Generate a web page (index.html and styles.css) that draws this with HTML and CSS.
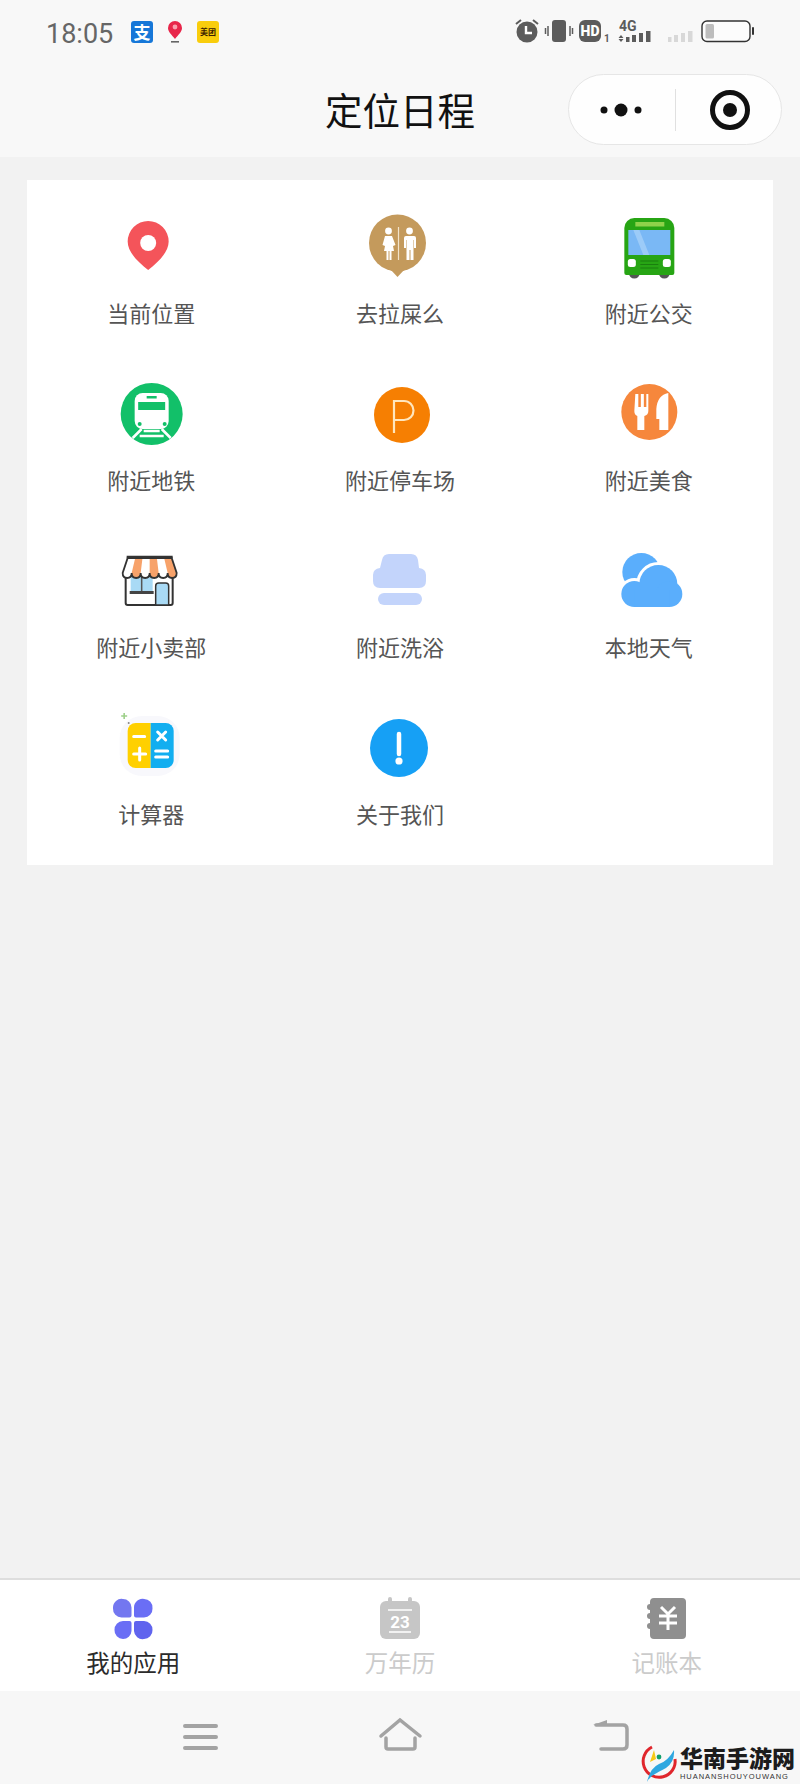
FILE: index.html
```html
<!DOCTYPE html>
<html lang="zh-CN">
<head>
  <meta charset="UTF-8" />
  <meta name="viewport" content="width=device-width, initial-scale=1.0"/>
  <title>定位日程</title>
  <link rel="stylesheet" href="styles.css">
</head>
<body>

<div class="page">

  <!-- Status bar -->
  <div class="status-bar">
    <span class="time">18:05</span>
    <span class="app-icon alipay">支</span>
    <svg class="map-icon" viewBox="0 0 16 24">
      <path d="M8 1a7 7 0 0 1 7 7c0 4-4 7-7 11c-3-4-7-7-7-11a7 7 0 0 1 7-7z" fill="#e8264a"/>
      <circle cx="8" cy="7" r="2.4" fill="#f9a0ae"/>
      <rect x="4" y="21" width="8" height="1.6" fill="#666"/>
    </svg>
    <span class="app-icon meituan">美团</span>
    <svg class="status-icons" viewBox="510 14 250 36">
      <!-- alarm -->
      <circle cx="528" cy="32" r="10.5" fill="#5c5c5c"/>
      <path d="M517 24l5-4M539 24l-5-4" stroke="#5c5c5c" stroke-width="2" fill="none"/>
      <path d="M527 26v7h6" stroke="#fff" stroke-width="2.4" fill="none"/>
      <!-- vibrate -->
      <rect x="553" y="20" width="14" height="22" rx="3" fill="#5c5c5c"/>
      <path d="M549 26v10M546.500 28v6M571 26v10M573.500 28v6" stroke="#5c5c5c" stroke-width="1.500"/>
      <!-- HD -->
      <rect x="580" y="20" width="22" height="22" rx="6" fill="#5c5c5c"/>
      <text class="hd-text" x="591" y="36">HD</text>
      <text class="sim-text" x="605" y="42">1</text>
      <!-- 4G signal -->
      <text class="net-text" x="620" y="31">4G</text>
      <path d="M622 35l-2.500 3h5zM622 42l-2.500-3h5z" fill="#5c5c5c"/>
      <rect x="627" y="37" width="3.500" height="5" fill="#5c5c5c"/>
      <rect x="633" y="35" width="4" height="7" fill="#5c5c5c"/>
      <rect x="640" y="33" width="4" height="9" fill="#5c5c5c"/>
      <rect x="647" y="31" width="4.500" height="11" fill="#5c5c5c"/>
      <rect x="669" y="37" width="3.500" height="5" fill="#d8d8d8"/>
      <rect x="675" y="35" width="4" height="7" fill="#d8d8d8"/>
      <rect x="682" y="33" width="4" height="9" fill="#d8d8d8"/>
      <rect x="689" y="31" width="4.500" height="11" fill="#d8d8d8"/>
      <!-- battery -->
      <rect x="703" y="21" width="48" height="20.500" rx="5" fill="#fcfcfc" stroke="#333" stroke-width="1.400"/>
      <rect x="706.500" y="24" width="8.500" height="14.500" rx="1.500" fill="#bdbdbd"/>
      <rect x="753" y="27" width="2" height="8" rx="1" fill="#333"/>
    </svg>
  </div>

  <!-- Title bar -->
  <header class="title-bar">
    <h1>定位日程</h1>
    <div class="capsule">
      <svg class="capsule-more" viewBox="0 0 60 20">
        <circle cx="13" cy="10" r="3.500"/>
        <circle cx="30" cy="10" r="6.500"/>
        <circle cx="47" cy="10" r="3.500"/>
      </svg>
      <span class="capsule-line"></span>
      <svg class="capsule-target" viewBox="0 0 44 44">
        <circle cx="22" cy="22" r="17.500" fill="none" stroke="#111" stroke-width="5"/>
        <circle cx="22" cy="22" r="7"/>
      </svg>
    </div>
  </header>

  <!-- App grid -->
  <main class="content">
    <section class="card">

      <a class="item">
        <svg class="item-icon" viewBox="111.330 205 80 80">
          <path d="M148.500 221a20.500 20.500 0 0 1 20.500 20.500c0 11-11 21-20.500 28.500c-9.500-7.500-20.500-17.500-20.500-28.500a20.500 20.500 0 0 1 20.500-20.500z" fill="#f4545a"/>
          <circle cx="148.500" cy="243" r="8" fill="#fff"/>
        </svg>
        <span>当前位置</span>
      </a>

      <a class="item">
        <svg class="item-icon" viewBox="360 205 80 80">
          <circle cx="397.500" cy="243" r="28.500" fill="#c49a5c"/>
          <path d="M390 269h15l-7.500 8z" fill="#c49a5c"/>
          <path d="M398.500 227v33" stroke="#f3e4cb" stroke-width="1.200"/>
          <circle cx="388.500" cy="231" r="3.400" fill="#fff"/>
          <path d="M385 236h7l3.500 9l-2.500 1l1 5h-2.500v9h-2v-9h-1v9h-2v-9h-2.500l1-5l-2.500-1z" fill="#fff"/>
          <circle cx="409.500" cy="231" r="3.400" fill="#fff"/>
          <path d="M405 236h9q2 0 2 2v10h-2v-8h-.500v20h-3v-10h-1v10h-3v-20h-.500v8h-2v-10q0-2 2-2z" fill="#fff"/>
        </svg>
        <span>去拉屎么</span>
      </a>

      <a class="item">
        <svg class="item-icon" viewBox="608.670 205 80 80">
          <circle cx="634" cy="273" r="5.500" fill="#555"/>
          <circle cx="664" cy="273" r="5.500" fill="#555"/>
          <path d="M634 218h30a10 10 0 0 1 10 10v45a2 2 0 0 1-2 2h-46a2 2 0 0 1-2-2v-45a10 10 0 0 1 10-10z" fill="#27a514"/>
          <rect x="635" y="222" width="29" height="4.500" fill="#8ed24a"/>
          <rect x="628" y="230" width="42" height="25" fill="#7ab8f5"/>
          <path d="M633 230l10 25h6l-10-25z" fill="#9ccbf8"/>
          <rect x="627.500" y="259" width="8" height="8" rx="2.500" fill="#fff"/>
          <rect x="662.500" y="259" width="8" height="8" rx="2.500" fill="#fff"/>
          <path d="M640 261h18M640 264.500h18M640 268h18" stroke="#1a7f0e" stroke-width="1.200"/>
        </svg>
        <span>附近公交</span>
      </a>

      <a class="item">
        <svg class="item-icon" viewBox="111.330 372 80 80">
          <circle cx="152" cy="414" r="31" fill="#12c069"/>
          <path d="M143 393h18a8 8 0 0 1 8 8v20a8 8 0 0 1-8 8h-18a8 8 0 0 1-8-8v-20a8 8 0 0 1 8-8z" fill="#fff"/>
          <rect x="138.500" y="402" width="27" height="8" fill="#12c069"/>
          <rect x="147" y="396" width="10" height="2.500" fill="#12c069"/>
          <circle cx="140" cy="424" r="2" fill="#12c069"/>
          <circle cx="165" cy="424" r="2" fill="#12c069"/>
          <path d="M142 429l-9 9M162 429l9 9M144 431h16M140 436h24" stroke="#fff" stroke-width="2.600" fill="none"/>
        </svg>
        <span>附近地铁</span>
      </a>

      <a class="item">
        <svg class="item-icon" viewBox="360 372 80 80">
          <circle cx="402" cy="415" r="28" fill="#f67f02"/>
          <path d="M394 433v-32h10a9.500 9.500 0 0 1 0 19h-10" fill="none" stroke="#ffe6bd" stroke-width="2.200"/>
        </svg>
        <span>附近停车场</span>
      </a>

      <a class="item">
        <svg class="item-icon" viewBox="608.670 372 80 80">
          <circle cx="649" cy="412" r="28" fill="#f6873c"/>
          <path d="M635 394h3v13h2.500v-13h3v13h2.500v-13h2v17q0 4-4 5v14h-7v-14q-3-1-3-5z" fill="#fff"/>
          <path d="M668 393q-11 2-12 16v10h3v11h9z" fill="#fff"/>
        </svg>
        <span>附近美食</span>
      </a>

      <a class="item">
        <svg class="item-icon" viewBox="111.330 539 80 80">
          <rect x="126" y="570" width="47" height="35" rx="2" fill="#fff" stroke="#333" stroke-width="2"/>
          <rect x="131" y="576" width="22" height="17" fill="#a9daf5"/>
          <path d="M142 576v17" stroke="#555" stroke-width="1.500"/>
          <rect x="130" y="591" width="24" height="3" fill="#444"/>
          <path d="M156 605v-19q0-3 3-3h7q3 0 3 3v19z" fill="#a9daf5" stroke="#333" stroke-width="1.500"/>
          <path d="M128 558h44l5 15q0 5-4.500 5t-4.500-5q0 5-4.500 5t-4.500-5q0 5-4.500 5t-4.500-5q0 5-4.500 5t-4.500-5q0 5-4.500 5t-4.500-5q0 5-4.500 5t-4.500-5z" fill="#fff"/>
          <path d="M135.300 559l-3.300 14q0 5 4.500 5t4.500-5l1.700-14zM150 559v14q0 5 4.500 5t4.500-5l-1.700-14zM164.700 559l3.300 14q0 5 4.500 5t4.500-5l-5-14z" fill="#f7a26a"/>
          <path d="M128 558h44l5 15q0 5-4.500 5t-4.500-5q0 5-4.500 5t-4.500-5q0 5-4.500 5t-4.500-5q0 5-4.500 5t-4.500-5q0 5-4.500 5t-4.500-5q0 5-4.500 5t-4.500-5z" fill="none" stroke="#333" stroke-width="1.800"/>
          <path d="M127 557h46" stroke="#333" stroke-width="2.400"/>
        </svg>
        <span>附近小卖部</span>
      </a>

      <a class="item">
        <svg class="item-icon" viewBox="360 539 80 80">
          <path d="M389 554h22q6 0 7 6l1 8q7 1 7 7v6q0 7-7 7h-39q-7 0-7-7v-6q0-6 7-7l2-8q1-6 7-6z" fill="#c3d4fb"/>
          <rect x="378" y="593" width="44" height="12" rx="6" fill="#c3d4fb"/>
        </svg>
        <span>附近洗浴</span>
      </a>

      <a class="item">
        <svg class="item-icon" viewBox="608.670 539 80 80">
          <circle cx="641" cy="572" r="19" fill="#5aaefc"/>
          <g fill="#fff" stroke="#fff" stroke-width="6">
            <circle cx="634" cy="594" r="13"/>
            <circle cx="658" cy="584" r="19"/>
            <circle cx="669" cy="594" r="13"/>
          </g>
          <rect x="618" y="607" width="70" height="6" fill="#fff"/>
          <g fill="#5aaefc">
            <circle cx="634" cy="594" r="13"/>
            <circle cx="658" cy="584" r="19"/>
            <circle cx="669" cy="594" r="13"/>
            <rect x="634" y="590" width="35" height="17"/>
          </g>
        </svg>
        <span>本地天气</span>
      </a>

      <a class="item">
        <svg class="item-icon" viewBox="111.330 706 80 80">
          <rect x="120" y="716" width="60" height="60" rx="22" fill="#f8f8fc"/>
          <path d="M136 723h15v45h-15a8 8 0 0 1-8-8v-29a8 8 0 0 1 8-8z" fill="#ffd000"/>
          <path d="M151 723h15a8 8 0 0 1 8 8v29a8 8 0 0 1-8 8h-15z" fill="#12aef0"/>
          <path d="M134 736.500h11M134 754h12M140 748v12" stroke="#fff" stroke-width="3" stroke-linecap="round"/>
          <path d="M158 732l8 8M166 732l-8 8M156 751h12M156 757h12" stroke="#fff" stroke-width="3" stroke-linecap="round"/>
          <path d="M124.500 713v6M121.500 716h6" stroke="#9ed08a" stroke-width="1.600"/>
          <circle cx="129" cy="723" r="1" fill="#888"/>
        </svg>
        <span>计算器</span>
      </a>

      <a class="item">
        <svg class="item-icon" viewBox="360 706 80 80">
          <circle cx="399" cy="748" r="29" fill="#16a0f5"/>
          <path d="M399 734v20" stroke="#fff" stroke-width="4.500" stroke-linecap="round"/>
          <circle cx="399" cy="761" r="3.600" fill="#fff"/>
        </svg>
        <span>关于我们</span>
      </a>

    </section>
  </main>

  <!-- Tabs -->
  <nav class="tab-bar">
    <a class="tab tab-active">
      <svg class="tab-icon" viewBox="110 1595 48 48">
        <path d="M124 1599a8.500 8.500 0 0 1 8.500 8.500v8q0 2-2 2h-8a8.500 8.500 0 0 1-8.500-9v-1a8.500 8.500 0 0 1 10-8.500z" fill="#7377f0"/>
        <path d="M145 1599a8.500 8.500 0 0 1 8.500 9.500a8.500 8.500 0 0 1-8.500 9h-8q-2 0-2-2v-8a8.500 8.500 0 0 1 10.500-8.500z" fill="#6a6ef5"/>
        <path d="M124 1639a8.500 8.500 0 0 1-8.500-9a8.500 8.500 0 0 1 8.500-9h6.500q2 0 2 2v8a8.500 8.500 0 0 1-8.500 8z" fill="#6a6ef5"/>
        <path d="M145 1639a8.500 8.500 0 0 0 8.500-9a8.500 8.500 0 0 0-8.500-9h-8q-2 0-2 2v8a8.500 8.500 0 0 0 10 8z" fill="#6064ee"/>
      </svg>
      <span>我的应用</span>
    </a>
    <a class="tab">
      <svg class="tab-icon" viewBox="376 1595 48 48">
        <rect x="380" y="1601" width="40" height="38" rx="6" fill="#c6c6c6"/>
        <rect x="388" y="1597" width="4" height="8" rx="2" fill="#c6c6c6"/>
        <rect x="408" y="1597" width="4" height="8" rx="2" fill="#c6c6c6"/>
        <path d="M388 1610h24M389 1632h22" stroke="#fff" stroke-width="1.600"/>
        <text class="calendar-text" x="400" y="1628">23</text>
      </svg>
      <span>万年历</span>
    </a>
    <a class="tab">
      <svg class="tab-icon" viewBox="642 1595 48 48">
        <path d="M653 1598h28a4 4 0 0 1 4 4v33a4 4 0 0 1-4 4h-28a4 4 0 0 1-4-4v-6a3 3 0 0 1 0-6v-4a3 3 0 0 1 0-6v-3a3 3 0 0 1 0-6v-2a4 4 0 0 1 4-4z" fill="#8f8f8f"/>
        <path d="M660 1607l7 7l7-7M667 1614v16M658 1616h18M658 1623h18" fill="none" stroke="#fff" stroke-width="3"/>
      </svg>
      <span>记账本</span>
    </a>
  </nav>

  <!-- System nav -->
  <div class="system-nav">
    <svg class="nav-icon" viewBox="170 1710 60 60">
      <path d="M185 1726h31M185 1737h31M185 1748h31" stroke="#a3a3a3" stroke-width="4" stroke-linecap="round"/>
    </svg>
    <svg class="nav-icon" viewBox="370 1710 60 60">
      <path d="M381 1736l19-16l20 16M386 1738v9q0 2 2 2h25q2 0 2-2v-9" fill="none" stroke="#a3a3a3" stroke-width="3.500" stroke-linecap="round"/>
    </svg>
    <svg class="nav-icon nav-back" viewBox="580 1710 60 60">
      <path d="M596 1725h27q4 0 4 4v16q0 4-4 4h-22" fill="none" stroke="#a3a3a3" stroke-width="3.500" stroke-linecap="round"/>
      <path d="M593 1725l14-5v5z" fill="#a3a3a3"/>
    </svg>

    <!-- site watermark -->
    <div class="watermark">
      <svg class="watermark-logo" viewBox="640 1742 38 42">
        <path d="M652 1747a16 16 0 1 0 23 12" fill="none" stroke="#e0262c" stroke-width="3"/>
        <path d="M654 1750l-4 12l6-3z" fill="#f6c915"/>
        <circle cx="659" cy="1757" r="2.400" fill="#12a06a"/>
        <path d="M647 1782q3-14 12-18q9-3 15-14q1 12-8 18q-8 4-11 6q-5 2-8 8z" fill="#2ea7e0"/>
      </svg>
      <div class="watermark-text">
        <b>华南手游网</b>
        <small>HUANANSHOUYOUWANG</small>
      </div>
    </div>
  </div>

</div>

</body>
</html>
```

FILE: styles.css
```css
body {
  margin: 0;
  font-family: "Noto Sans CJK SC", Roboto, sans-serif;
  background: #f2f2f2;
}

.page {
  display: flex;
  flex-direction: column;
  height: 1784px;
  overflow: hidden;
}

/* Status bar */
.status-bar {
  display: flex;
  align-items: center;
  height: 64px;
  padding-left: 46px;
  background: #f8f8f8;
}

.time {
  width: 85px;
  padding-top: 4px;
  font-family: Roboto, sans-serif;
  font-size: 27px;
  color: #666;
}

.app-icon {
  display: flex;
  align-items: center;
  justify-content: center;
  width: 22px;
  height: 22px;
  border-radius: 3px;
}

.alipay {
  background: #1677d8;
  color: #fff;
  font-size: 17px;
  font-weight: 700;
  line-height: 22px;
}

.meituan {
  background: #f9cd0c;
  color: #3a2000;
  font-size: 8px;
  font-weight: 700;
  line-height: 22px;
}

.map-icon {
  width: 16px;
  height: 24px;
  margin: 0 14px;
}

.status-icons {
  width: 250px;
  height: 36px;
  margin-left: 290px;
}

.hd-text {
  font-family: Roboto, sans-serif;
  font-size: 14px;
  font-weight: 900;
  fill: #fff;
  text-anchor: middle;
}

.sim-text {
  font-family: Roboto, sans-serif;
  font-size: 10px;
  font-weight: 700;
  fill: #5c5c5c;
}

.net-text {
  font-family: Roboto, sans-serif;
  font-size: 14px;
  font-weight: 700;
  fill: #5c5c5c;
}

/* Title bar */
.title-bar {
  display: grid;
  grid-template-columns: 1fr auto 1fr;
  align-items: center;
  height: 93px;
  padding-right: 18px;
  padding-left: 18px;
  background: #f8f8f8;
}

.title-bar h1 {
  grid-column: 2;
  margin: -3px 0 0;
  font-size: 37.5px;
  font-weight: 400;
  line-height: 50px;
  color: #111;
}

.capsule {
  display: flex;
  align-items: center;
  justify-self: end;
  box-sizing: border-box;
  width: 214px;
  height: 71px;
  margin-top: -2px;
  border: 1px solid #e6e6e6;
  border-radius: 36px;
  background: #fefefe;
}

.capsule-more {
  width: 60px;
  height: 20px;
  margin-left: 22px;
  margin-right: 24px;
  fill: #111;
}

.capsule-line {
  width: 1px;
  height: 42px;
  background: #e0e0e0;
}

.capsule-target {
  width: 44px;
  height: 44px;
  margin-left: 32px;
  fill: #111;
}

/* App grid */
.content {
  flex: 1;
  padding: 23px 27px 0;
}

.card {
  display: grid;
  grid-template-columns: repeat(3, 1fr);
  grid-auto-rows: 167px;
  padding: 8px 0 9px;
  background: #fff;
}

.item {
  display: flex;
  flex-direction: column;
  align-items: center;
  padding-top: 17px;
  font-size: 22px;
  line-height: 30px;
  color: #555;
}

.item-icon {
  width: 80px;
  height: 80px;
  margin-bottom: 12px;
}

/* Tabs */
.tab-bar {
  display: grid;
  grid-template-columns: repeat(3, 1fr);
  box-sizing: border-box;
  height: 113px;
  border-top: 2px solid #dedede;
  background: #fff;
}

.tab {
  display: flex;
  flex-direction: column;
  align-items: center;
  padding-top: 15px;
  font-size: 23.5px;
  line-height: 30px;
  color: #cbcbcb;
}

.tab-active {
  color: #2b2b2b;
}

.tab-icon {
  width: 48px;
  height: 48px;
  margin-bottom: 4px;
}

.calendar-text {
  font-family: Roboto, sans-serif;
  font-size: 17px;
  font-weight: 700;
  fill: #fff;
  text-anchor: middle;
}

/* System nav */
.system-nav {
  position: relative;
  display: flex;
  align-items: flex-start;
  gap: 140px;
  box-sizing: border-box;
  height: 93px;
  padding: 19px 0 0 170px;
  background: #f7f7f7;
}

.nav-icon {
  width: 60px;
  height: 60px;
}

.nav-back {
  margin-left: 10px;
}

.watermark {
  position: absolute;
  right: 5px;
  bottom: 0;
  display: flex;
  align-items: flex-start;
  gap: 2px;
}

.watermark-logo {
  width: 38px;
  height: 42px;
}

.watermark-text {
  display: flex;
  flex-direction: column;
  padding-top: 1px;
}

.watermark-text b {
  font-size: 23px;
  font-weight: 900;
  line-height: 28px;
  color: #1c1c1c;
}

.watermark-text small {
  font-family: "Liberation Sans", sans-serif;
  font-size: 7.5px;
  line-height: 11px;
  letter-spacing: 0.95px;
  color: #333;
}
```
